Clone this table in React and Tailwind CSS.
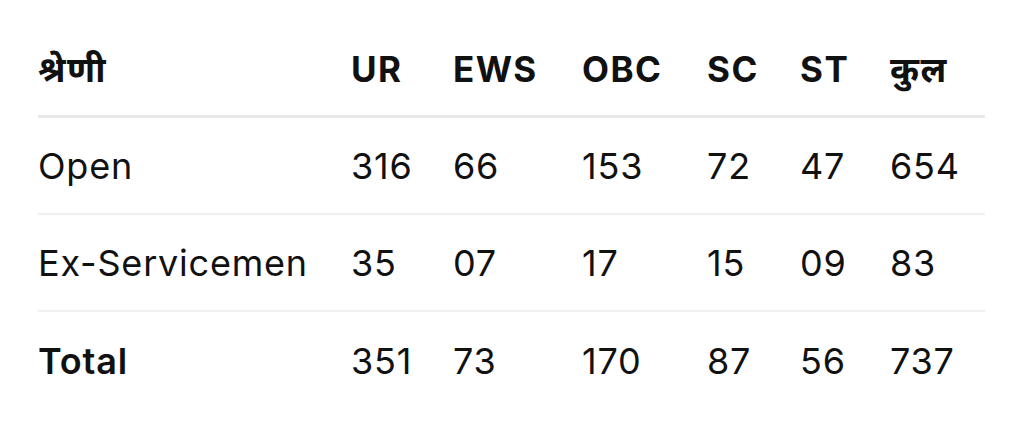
export default function App() {
  const cols = "grid grid-cols-[313px_102px_129px_125px_93px_90px_95px] items-center";
  const rows = [
    ["Open", "316", "66", "153", "72", "47", "654"],
    ["Ex-Servicemen", "35", "07", "17", "15", "09", "83"],
  ];
  return (
    <div className="w-[1024px] h-[445px] bg-white pl-[38px] pt-[24px] font-['Inter','Noto_Sans','Noto_Sans_CJK_SC',sans-serif] text-[#111111]">
      <div className="w-[947px]">
        <div className={`${cols} h-[94px] border-b-[3px] border-[#e8e8e8] text-[35px] tracking-[1.5px] font-bold`}>
          <div>श्रेणी</div>
          <div>UR</div>
          <div>EWS</div>
          <div>OBC</div>
          <div>SC</div>
          <div>ST</div>
          <div>कुल</div>
        </div>
        {rows.map((r) => (
          <div key={r[0]} className={`${cols} h-[97px] border-b-2 border-[#f0f0f0] text-[36px] tracking-[0.8px] font-normal`}>
            {r.map((c, i) => (
              <div key={i}>{c}</div>
            ))}
          </div>
        ))}
        <div className={`${cols} h-[97px] text-[36px] tracking-[0.8px]`}>
          <div className="font-semibold">Total</div>
          <div>351</div>
          <div>73</div>
          <div>170</div>
          <div>87</div>
          <div>56</div>
          <div>737</div>
        </div>
      </div>
    </div>
  );
}
